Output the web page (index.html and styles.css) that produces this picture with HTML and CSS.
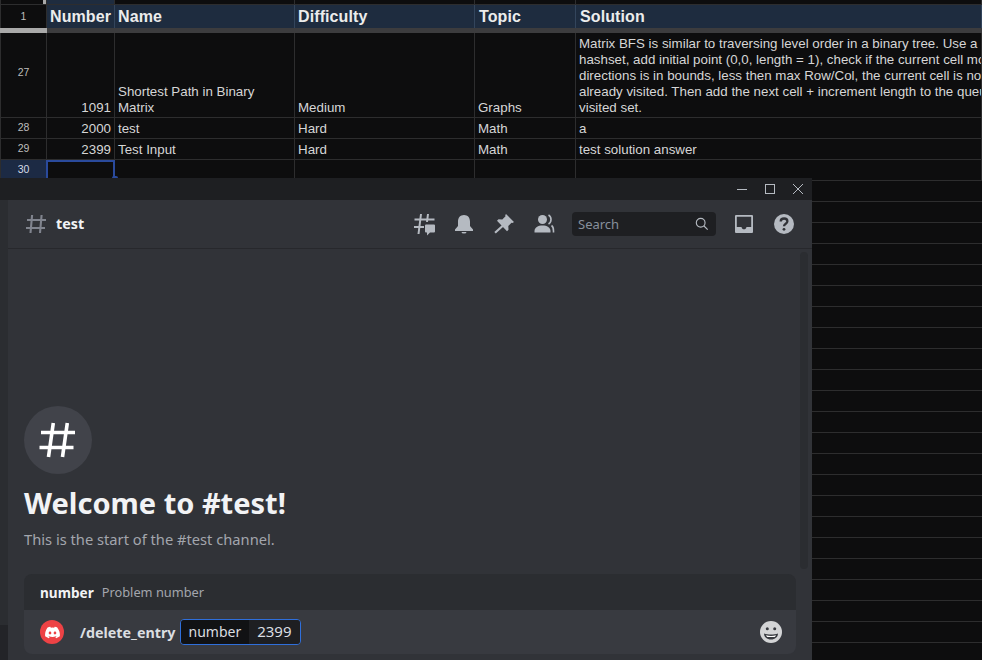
FILE: index.html
```html
<!DOCTYPE html>
<html>
<head lang="en">
    <meta charset="UTF-8">
    <title>Sheet and Discord</title>
    <link rel="stylesheet" href="styles.css">
</head>
<body>
    <div id="sheet">
        <div class="row row-top">
            <div class="cell head"></div><div class="cell top-blue"></div><div class="cell"></div><div class="cell"></div><div class="cell"></div><div class="cell"></div>
        </div>
        <div class="row row-title">
            <div class="cell head">1</div>
            <div class="cell title">Number</div>
            <div class="cell title">Name</div>
            <div class="cell title">Difficulty</div>
            <div class="cell title title-r">Topic</div>
            <div class="cell title title-r">Solution</div>
        </div>
        <div class="freeze"><div class="freeze-grab"></div></div>
        <div class="row row-tall">
            <div class="cell head mid">27</div>
            <div class="cell num">1091</div>
            <div class="cell">Shortest Path in Binary<br>Matrix</div>
            <div class="cell">Medium</div>
            <div class="cell">Graphs</div>
            <div class="cell wrap">Matrix BFS is similar to traversing level order in a binary tree. Use a<br>hashset, add initial point (0,0, length = 1), check if the current cell moved<br>directions is in bounds, less then max Row/Col, the current cell is not<br>already visited. Then add the next cell + increment length to the queue<br>visited set.</div>
        </div>
        <div class="row">
            <div class="cell head">28</div>
            <div class="cell num">2000</div>
            <div class="cell">test</div>
            <div class="cell">Hard</div>
            <div class="cell">Math</div>
            <div class="cell">a</div>
        </div>
        <div class="row">
            <div class="cell head">29</div>
            <div class="cell num">2399</div>
            <div class="cell">Test Input</div>
            <div class="cell">Hard</div>
            <div class="cell">Math</div>
            <div class="cell">test solution answer</div>
        </div>
        <div class="row">
            <div class="cell head head-on">30</div>
            <div class="cell active"></div>
            <div class="cell"></div><div class="cell"></div><div class="cell"></div><div class="cell"></div>
        </div>
        <div class="row plain"></div><div class="row plain"></div><div class="row plain"></div><div class="row plain"></div>
        <div class="row plain"></div><div class="row plain"></div><div class="row plain"></div><div class="row plain"></div>
        <div class="row plain"></div><div class="row plain"></div><div class="row plain"></div><div class="row plain"></div>
        <div class="row plain"></div><div class="row plain"></div><div class="row plain"></div><div class="row plain"></div>
        <div class="row plain"></div><div class="row plain"></div><div class="row plain"></div><div class="row plain"></div>
        <div class="row plain"></div><div class="row plain"></div><div class="row plain"></div>
    </div>

    <div id="discord">
        <div class="titlebar">
            <svg class="win-btn" viewBox="0 0 12 12"><path d="M1 6.500h10" stroke="#b5bac1" fill="none"/></svg>
            <svg class="win-btn" viewBox="0 0 12 12"><rect x="1.500" y="1.500" width="9" height="9" stroke="#b5bac1" fill="none"/></svg>
            <svg class="win-btn" viewBox="0 0 12 12"><path d="M1 1l10 10M11 1L1 11" stroke="#b5bac1" fill="none"/></svg>
        </div>
        <div class="body">
            <div class="strip"><div class="strip-foot"></div></div>
            <div class="main">
                <div class="topbar">
                    <svg class="hash" viewBox="0 0 24 24"><path d="M6.500 21l1.600-18M16 21l1.600-18M3 8h19M2 16h19" stroke="#80848e" stroke-width="2.100" fill="none"/></svg>
                    <span class="chan">test</span>
                    <div class="tools">
                        <svg class="tool" viewBox="0 0 24 24"><path d="M6.500 22l2.500-20M15 10l1-8M2.500 7.500h20M2 15h10" stroke="#b5bac1" stroke-width="2" fill="none"/><path d="M14 12.500h8a1 1 0 0 1 1 1v6a1 1 0 0 1-1 1h-4l-3 3v-3h-1a1 1 0 0 1-1-1v-6a1 1 0 0 1 1-1z" fill="#b5bac1"/></svg>
                        <svg class="tool" viewBox="0 0 24 24"><path d="M12 3c-3.800 0-6 2.800-6 6.500V14l-3 3.500V19h18v-1.500L18 14V9.500C18 5.800 15.800 3 12 3zM9.500 20h5a2.500 1.500 0 0 1-5 0z" fill="#b5bac1"/></svg>
                        <svg class="tool" viewBox="0 0 24 24"><path d="M14 2l8 8-1.500 1-1-.3-3.200 3.200.2 3.800-1.500 1.500L5 8.700l1.500-1.400 3.800.2 3.200-3.200-.3-1zM9.500 13.500l1.500 1.500-7.200 6.500-1.500-1.500z" fill="#b5bac1"/></svg>
                        <svg class="tool" viewBox="0 0 24 24"><circle cx="10.500" cy="7.500" r="4.500" fill="#b5bac1"/><path d="M2.500 20.500v-1.500c0-3.500 3.500-5.500 8-5.500s8 2 8 5.500v1.500z" fill="#b5bac1"/><path d="M16.500 3c1.700 1 2.500 2.500 2.500 4.500s-.8 3.500-2.500 4.500M19.500 13.500c1.500 1 2 3 2 5.500v1.500" stroke="#b5bac1" stroke-width="1.600" fill="none"/></svg>
                        <div class="search">
                            <span>Search</span>
                            <svg class="search-ico" viewBox="0 0 16 16"><circle cx="6.500" cy="6.500" r="5" stroke="#b5bac1" stroke-width="1.300" fill="none"/><path d="M10 10l4.500 4.500" stroke="#b5bac1" stroke-width="1.300"/></svg>
                        </div>
                        <svg class="tool" viewBox="0 0 24 24"><path d="M4 3h16a1 1 0 0 1 1 1v16a1 1 0 0 1-1 1H4a1 1 0 0 1-1-1V4a1 1 0 0 1 1-1zM4.800 4.800V15h4.700c.3 1.500 1.200 2.300 2.500 2.300s2.200-.8 2.500-2.300h4.700V4.800z" fill="#b5bac1" fill-rule="evenodd"/></svg>
                        <svg class="tool" viewBox="0 0 24 24"><circle cx="12" cy="12" r="10" fill="#b5bac1"/><path d="M8.700 9.500c0-2 1.500-3 3.400-3s3.300 1 3.300 2.800c0 2.500-3.400 2.400-3.400 5" stroke="#313338" stroke-width="2.300" fill="none"/><circle cx="12" cy="17.300" r="1.400" fill="#313338"/></svg>
                    </div>
                </div>
                <div class="content">
                    <div class="scrollbar"></div>
                    <div class="welcome">
                        <div class="bighash">
                            <svg viewBox="0 0 42 42"><path d="M11.500 38l4.800-34M25.500 38l4.800-34M4 13.500h34M2.500 28.500h34" stroke="#fff" stroke-width="3.600" fill="none"/></svg>
                        </div>
                        <h1>Welcome to #test!</h1>
                        <p>This is the start of the #test channel.</p>
                    </div>
                    <div class="composer">
                        <div class="hint"><b>number</b><span>Problem number</span></div>
                        <div class="input">
                            <div class="app-ico">
                                <svg viewBox="0 0 24 24"><path d="M19.300 5.300A17 17 0 0 0 15 4l-.6 1.200a15.600 15.600 0 0 0-4.800 0L9 4a17 17 0 0 0-4.300 1.300C2 9.400 1.200 13.400 1.600 17.300A17 17 0 0 0 6.900 20l1.100-1.800-1.700-.8.400-.3a12.200 12.200 0 0 0 10.600 0l.4.300-1.700.8 1.100 1.800a17 17 0 0 0 5.300-2.700c.5-4.500-.8-8.500-3.600-12zM8.500 14.900c-1 0-1.900-1-1.900-2.100s.8-2.100 1.900-2.100 1.900 1 1.900 2.100-.8 2.100-1.900 2.100zm7 0c-1 0-1.900-1-1.900-2.100s.8-2.100 1.900-2.100 1.900 1 1.900 2.100-.9 2.100-1.900 2.100z" fill="#fff"/></svg>
                            </div>
                            <span class="cmd">/delete_entry</span>
                            <div class="opt"><span class="opt-name">number</span><span class="opt-val">2399</span></div>
                            <svg class="emoji" viewBox="0 0 22 22"><circle cx="11" cy="11" r="11" fill="#d3d4d6"/><circle cx="7.300" cy="7.800" r="1.500" fill="#383a40"/><circle cx="14.700" cy="7.800" r="1.500" fill="#383a40"/><path d="M4 12.500c2 .6 4.500 1 7 1s5-.4 7-1c0 3.500-3 6-7 6s-7-2.500-7-6z" fill="#383a40"/><path d="M6 14.300c1.500.4 3.300.6 5 .6s3.500-.2 5-.6c-.3.700-.7 1.200-1.300 1.700H7.300c-.6-.5-1-1-1.300-1.700z" fill="#fff"/></svg>
                        </div>
                    </div>
                </div>
            </div>
        </div>
    </div>
</body>
</html>
```

FILE: styles.css
```css
*{
    margin: 0;
    padding: 0;
    box-sizing: border-box;
}
html,body{
    width: 982px;
    height: 660px;
    overflow: hidden;
    background: #0d0d0e;
}
#sheet{
    width: 982px;
    font: 13.33px/16px "Liberation Sans", Arial, sans-serif;
    color: #d6d6d6;
}
.row{
    display: grid;
    grid-template-columns: 47px 68px 180px 180px 101px 406px;
    height: 21px;
    border-bottom: 1px solid #2d2d2e;
}
.row-top{
    height: 5px;
}
.row-top .head{
    background: linear-gradient(to right, transparent 42px, #a9a9a9 42px);
}
.row-title{
    height: 23px;
    border-bottom: 0;
}
.row-tall{
    height: 85px;
}
.row.plain{
    display: block;
}
.cell{
    border-right: 1px solid #2d2d2e;
    padding: 0 3px 1px 3px;
    display: flex;
    align-items: flex-end;
    overflow: hidden;
    white-space: nowrap;
}
.head{
    justify-content: center;
    align-items: center;
    font-size: 10.5px;
    color: #bdbdbd;
    padding: 0 0 2px;
    border-left: 1px solid #2d2d2e;
}
.head.mid{
    padding-bottom: 6px;
}
.head-on{
    background: #1c2a44;
    color: #d6dbe6;
}
.top-blue{
    background: #1e2c3f;
}
.title{
    background: #1e2c3f;
    border-right-color: #33455c;
    color: #ececec;
    font-weight: bold;
    font-size: 16px;
    letter-spacing: .1px;
    align-items: center;
    padding: 0 3px;
}
.title-r{
    padding-left: 4px;
}
.num{
    justify-content: flex-end;
}
.wrap{
    display: block;
    padding-top: 3px;
}
.active{
    border: 2px solid #2a4a9c;
    border-bottom: 0;
    margin-left: -1px;
    overflow: visible;
    position: relative;
}
.active::after{
    content: "";
    position: absolute;
    right: -5px;
    bottom: 2px;
    width: 6px;
    height: 2px;
    border-radius: 3px 3px 0 0;
    background: #2a4a9c;
}
.freeze{
    height: 5px;
    background: #3c3c3e;
}
.freeze-grab{
    width: 47px;
    height: 100%;
    background: #a9a9a9;
}

/* discord window */
#discord{
    position: absolute;
    left: 0;
    top: 178px;
    width: 812px;
    height: 482px;
    background: #1e1f22;
    font-family: "Noto Sans", "Open Sans", sans-serif;
    color: #f2f3f5;
    display: flex;
    flex-direction: column;
}
.titlebar{
    height: 22px;
    display: flex;
    justify-content: flex-end;
    align-items: center;
    gap: 16px;
    padding: 0 8px 0 0;
}
.win-btn{
    width: 12px;
    height: 12px;
}
.body{
    flex: 1;
    display: flex;
    min-height: 0;
}
.strip{
    width: 8px;
    background: #2b2d31;
    display: flex;
    flex-direction: column;
    justify-content: flex-end;
}
.strip-foot{
    height: 35px;
    background: #232428;
}
.main{
    flex: 1;
    background: #313338;
    display: flex;
    flex-direction: column;
}
.topbar{
    height: 49px;
    display: flex;
    align-items: center;
    padding: 0 16px;
    border-bottom: 1px solid #27282c;
}
.hash{
    width: 24px;
    height: 24px;
    margin-right: 8px;
}
.chan{
    font-size: 14.3px;
    font-weight: bold;
    padding-bottom: 2px;
}
.tools{
    margin-left: auto;
    display: flex;
    align-items: center;
    gap: 16px;
}
.tool{
    width: 24px;
    height: 24px;
    display: block;
}
.search{
    width: 144px;
    height: 24px;
    background: #1e1f22;
    border-radius: 4px;
    display: flex;
    justify-content: space-between;
    align-items: center;
    padding: 0 7px 0 6px;
    font-size: 13px;
    color: #87909c;
}
.search-ico{
    width: 14px;
    height: 14px;
}
.content{
    flex: 1;
    position: relative;
    display: flex;
    flex-direction: column;
    justify-content: flex-end;
    padding: 0 16px 6px;
}
.scrollbar{
    position: absolute;
    right: 4px;
    top: 3px;
    bottom: 91px;
    width: 8px;
    border-radius: 4px;
    background: #2b2d31;
}
.welcome{
    margin-bottom: 25px;
}
.bighash{
    width: 68px;
    height: 68px;
    border-radius: 50%;
    background: #41434a;
    display: flex;
    align-items: center;
    justify-content: center;
}
.bighash svg{
    width: 42px;
    height: 42px;
}
h1{
    font-size: 29px;
    line-height: 40px;
    margin-top: 9px;
    font-weight: bold;
}
.welcome p{
    font-size: 14.7px;
    line-height: 20px;
    margin-top: 6px;
    color: #a3a6ad;
}
.composer{
    width: 772px;
    border-radius: 8px;
    overflow: hidden;
}
.hint{
    height: 36px;
    background: #2b2d31;
    display: flex;
    align-items: center;
    padding: 0 16px;
    gap: 8px;
    font-size: 12.8px;
}
.hint b{
    font-size: 13.6px;
}
.hint span{
    color: #a3a6ad;
}
.input{
    height: 44px;
    background: #383a40;
    display: flex;
    align-items: center;
    padding: 0 14px 0 16px;
}
.app-ico{
    width: 24px;
    height: 24px;
    border-radius: 50%;
    background: #ed4245;
    display: flex;
    align-items: center;
    justify-content: center;
    margin-right: 16px;
}
.app-ico svg{
    width: 17px;
    height: 17px;
}
.cmd{
    font-size: 14.3px;
    font-weight: bold;
    color: #dbdee1;
    margin-right: 4px;
}
.opt{
    display: flex;
    height: 26px;
    border: 1px solid #2f6fdb;
    border-radius: 4px;
    overflow: hidden;
    font-size: 15px;
    line-height: 23px;
    color: #dbdee1;
}
.opt-name{
    background: #111214;
    padding: 0 8px;
    font-size: 14px;
}
.opt-val{
    background: #1e1f22;
    padding: 0 8px;
}
.emoji{
    width: 22px;
    height: 22px;
    margin-left: auto;
}
```
